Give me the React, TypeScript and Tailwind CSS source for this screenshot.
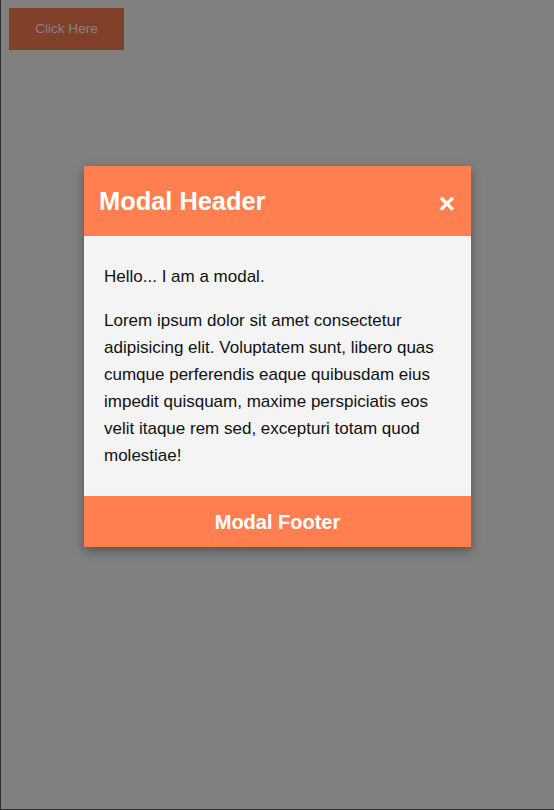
export default function App() {
  return (
    <div
      className="relative h-[810px] w-[554px] overflow-hidden border-b border-l border-[#2e2e2e] bg-[#808080]"
      style={{ fontFamily: '"Liberation Sans", Arial, sans-serif' }}
    >
      <div className="pl-[8px] pt-[8px]">
        <button className="flex h-[42px] w-[115px] items-center justify-center bg-[#80402a] text-[13.6px] text-[#858585]">
          Click Here
        </button>
      </div>
      <div className="absolute left-[83px] top-[166px] w-[387px] shadow-[0_4px_10px_rgba(0,0,0,0.35)]">
        <div className="flex h-[70px] items-center justify-between bg-[#ff7f50] pl-[15px] pr-[16px] text-white">
          <h2 className="mt-[2px] text-[25.4px] font-bold leading-none">Modal Header</h2>
          <span className="mt-[5px] text-[28px] font-bold leading-none">×</span>
        </div>
        <div className="bg-[#f4f4f4] px-[20px] pb-[27px] pt-[27px] text-[17px] leading-[27px] text-[#111]">
          <p>Hello... I am a modal.</p>
          <p className="mt-[17px]">
            Lorem ipsum dolor sit amet consectetur adipisicing elit. Voluptatem sunt, libero quas cumque perferendis eaque quibusdam eius impedit quisquam, maxime perspiciatis eos velit itaque rem sed, excepturi totam quod molestiae!
          </p>
        </div>
        <div className="flex h-[51px] items-center justify-center bg-[#ff7f50] text-[20px] font-bold text-white">
          Modal Footer
        </div>
      </div>
    </div>
  );
}
